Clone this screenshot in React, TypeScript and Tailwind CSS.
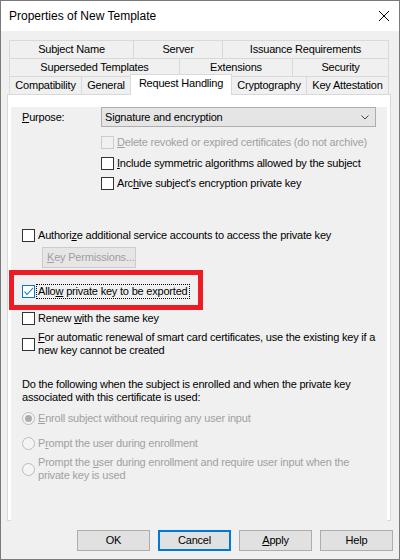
import clsx from "clsx";

const body = "font-['Liberation_Sans',Arial,sans-serif] text-[11px] leading-[13px] tracking-[-0.2px]";

function Box({ disabled, checked }: { disabled?: boolean; checked?: boolean }) {
  return (
    <span
      className={clsx(
        "relative block shrink-0 w-[13px] h-[13px] border",
        disabled ? "border-[#cccccc] bg-[#f0f0f0]" : checked ? "border-[#0078d7] bg-white" : "border-[#333333] bg-white"
      )}
    >
      {checked && (
        <svg className="absolute left-[-1px] top-[-1px]" width="13" height="13" viewBox="0 0 13 13">
          <path d="M2.5 6.5 L5 9.5 L11 3" fill="none" stroke="#0078d7" strokeWidth="1.1" />
        </svg>
      )}
    </span>
  );
}

function Radio({ selected }: { selected?: boolean }) {
  return (
    <span className="flex shrink-0 w-[13px] h-[13px] rounded-full border border-[#bcbcbc] bg-[#f4f4f4] items-center justify-center">
      {selected && <span className="block w-[7px] h-[7px] rounded-full bg-[#acacac]" />}
    </span>
  );
}

function U({ children }: { children: string }) {
  return <span className="underline underline-offset-[1px]">{children}</span>;
}

type Tab = { label: string; w: string; active?: boolean; noLeft?: boolean };

const row1: Tab[] = [
  { label: "Subject Name", w: "w-[124px]" },
  { label: "Server", w: "w-[89px]" },
  { label: "Issuance Requirements", w: "w-[167px]" },
];
const row2: Tab[] = [
  { label: "Superseded Templates", w: "w-[170px]" },
  { label: "Extensions", w: "w-[113px]" },
  { label: "Security", w: "w-[97px]" },
];
const row3: Tab[] = [
  { label: "Compatibility", w: "w-[72px]" },
  { label: "General", w: "w-[49px]" },
  { label: "Request Handling", w: "w-[102px]", active: true },
  { label: "Cryptography", w: "w-[74px]", noLeft: true },
  { label: "Key Attestation", w: "w-[83px]" },
];

function TabRow({ tabs, bottom }: { tabs: Tab[]; bottom?: boolean }) {
  return (
    <div className={clsx("flex h-[18px]", bottom && "items-end")}>
      {tabs.map((t, i) => (
        <div
          key={t.label}
          className={clsx(
            "flex items-center justify-center border-t border-[#d9d9d9] text-black",
            t.w,
            t.active
              ? "relative z-10 h-[21px] mb-[-1px] border-l border-r bg-white pb-[3px]"
              : "h-[18px] bg-[#f0f0f0]",
            !t.active && !t.noLeft && "border-l",
            i === tabs.length - 1 && "border-r"
          )}
        >
          {t.label}
        </div>
      ))}
    </div>
  );
}

function Btn({ children, focus }: { children: React.ReactNode; focus?: boolean }) {
  return (
    <div
      className={clsx(
        "flex items-center justify-center w-[73px] h-[21px] bg-[#e1e1e1]",
        focus ? "border-2 border-[#0078d7]" : "border border-[#adadad]"
      )}
    >
      {children}
    </div>
  );
}

export default function App() {
  return (
    <div className={clsx("relative flex flex-col w-[400px] h-[560px] border border-[#7a7a7a] bg-[#f0f0f0] text-black", body)}>
      {/* title bar */}
      <div className="flex h-[30px] items-center justify-between bg-white pl-[8px] pr-[10px] text-[12px] tracking-normal">
        <span>Properties of New Template</span>
        <svg width="10" height="10" viewBox="0 0 10 10">
          <path d="M0 0 L10 10 M10 0 L0 10" stroke="#000" strokeWidth="1" />
        </svg>
      </div>

      <div className="pt-[9px]">
        <div className="ml-[8px]">
          <TabRow tabs={row1} />
          <TabRow tabs={row2} />
          <TabRow tabs={row3} bottom />
        </div>

        <div className="ml-[6px] w-[384px] h-[427px] border border-[#d9d9d9] bg-white p-[3px]">
          <div className="h-full bg-[#f0f0f0] pl-[11px]">
            <div className="flex items-center h-[20px] mt-[9px]">
              <span className="w-[79px]">
                <U>P</U>urpose:
              </span>
              <div className="flex items-center justify-between w-[275px] h-[20px] border border-[#adadad] bg-[#e5e5e5] pl-[3px] pr-[6px]">
                <span>Signature and encryption</span>
                <svg width="8" height="5" viewBox="0 0 8 5">
                  <path d="M0.5 0.5 L4 4 L7.5 0.5" fill="none" stroke="#444" strokeWidth="1" />
                </svg>
              </div>
            </div>

            <div className="ml-[79px]">
              <div className="flex items-center gap-[3px] h-[13px] mt-[9px] text-[#a0a0a0]">
                <Box disabled />
                <span>
                  <U>D</U>elete revoked or expired certificates (do not archive)
                </span>
              </div>
              <div className="flex items-center gap-[3px] h-[13px] mt-[8px]">
                <Box />
                <span>
                  <U>I</U>nclude symmetric algorithms allowed by the subject
                </span>
              </div>
              <div className="flex items-center gap-[3px] h-[13px] mt-[7px]">
                <Box />
                <span>
                  Arc<U>h</U>ive subject's encryption private key
                </span>
              </div>
            </div>

            <div className="flex items-center gap-[3px] h-[13px] mt-[39px]">
              <Box />
              <span>
                Authori<U>z</U>e additional service accounts to access the private key
              </span>
            </div>
            <div className="flex items-center w-[94px] h-[21px] mt-[5px] ml-[20px] border border-[#cccccc] bg-[#e6e6e6] pl-[4px] text-[#a0a0a0]">
              <span>
                <U>K</U>ey Permissions...
              </span>
            </div>

            <div className="flex items-center gap-[2px] h-[13px] mt-[17px]">
              <Box checked />
              <span className="outline outline-1 outline-dotted outline-black px-[1px]">
                Allo<U>w</U> private key to be exported
              </span>
            </div>
            <div className="flex items-center gap-[3px] h-[13px] mt-[14px]">
              <Box />
              <span>
                Renew <U>w</U>ith the same key
              </span>
            </div>
            <div className="flex items-center gap-[3px] mt-[6px]">
              <Box />
              <div>
                <div>
                  <U>F</U>or automatic renewal of smart card certificates, use the existing key if a
                </div>
                <div>new key cannot be created</div>
              </div>
            </div>

            <div className="mt-[21px]">
              <div>Do the following when the subject is enrolled and when the private key</div>
              <div>associated with this certificate is used:</div>
            </div>

            <div className="text-[#a0a0a0]">
              <div className="flex items-center gap-[3px] h-[13px] mt-[8px]">
                <Radio selected />
                <span>
                  <U>E</U>nroll subject without requiring any user input
                </span>
              </div>
              <div className="flex items-center gap-[3px] h-[13px] mt-[12px]">
                <Radio />
                <span>
                  P<U>r</U>ompt the user during enrollment
                </span>
              </div>
              <div className="flex items-center gap-[3px] mt-[6px]">
                <Radio />
                <div>
                  <div>
                    Prompt the <U>u</U>ser during enrollment and require user input when the
                  </div>
                  <div>private key is used</div>
                </div>
              </div>
            </div>
          </div>
        </div>

        <div className="flex justify-end gap-[8px] mt-[9px] pr-[6px]">
          <Btn>OK</Btn>
          <Btn focus>Cancel</Btn>
          <Btn>
            <span>
              <U>A</U>pply
            </span>
          </Btn>
          <Btn>Help</Btn>
        </div>
      </div>

      {/* annotation */}
      <div className="absolute left-[8px] top-[269px] w-[194px] h-[40px] border-[5px] border-[#ed1c24]" />
    </div>
  );
}
